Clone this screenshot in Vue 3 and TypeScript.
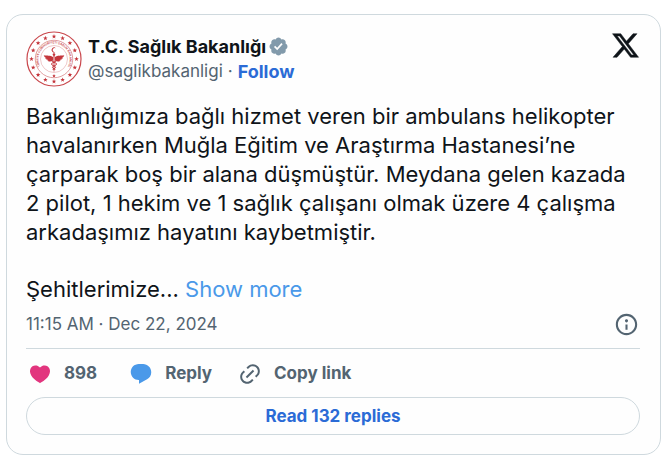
<script setup lang="ts">
interface Star {
  points: string
}

const handle = '@saglikbakanligi'
const replyCount = 132
const likeCount = 898

const paragraph =
  'Bakanlığımıza bağlı hizmet veren bir ambulans helikopter havalanırken Muğla Eğitim ve Araştırma Hastanesi’ne çarparak boş bir alana düşmüştür. Meydana gelen kazada 2 pilot, 1 hekim ve 1 sağlık çalışanı olmak üzere 4 çalışma arkadaşımız hayatını kaybetmiştir.'

// Ring of sixteen five-pointed stars around the ministry seal
function starPoints(cx: number, cy: number, outer: number): string {
  return Array.from({ length: 10 }, (_, i) => {
    const r = i % 2 === 0 ? outer : outer * 0.42
    const a = (Math.PI / 5) * i - Math.PI / 2
    return `${(cx + r * Math.cos(a)).toFixed(2)},${(cy + r * Math.sin(a)).toFixed(2)}`
  }).join(' ')
}

const stars: Star[] = Array.from({ length: 16 }, (_, i) => {
  const a = (Math.PI / 8) * i - Math.PI / 2
  return { points: starPoints(56 + 45 * Math.cos(a), 56 + 45 * Math.sin(a), 4.8) }
})
</script>

<template>
  <article class="card">
    <header class="head">
      <a class="avatar" href="#" aria-label="T.C. Sağlık Bakanlığı">
        <svg viewBox="0 0 112 112" aria-hidden="true">
          <defs>
            <path id="seal-ring" d="M37.6 81.3A31.2 31.2 0 1 1 74.4 81.3" />
          </defs>
          <circle cx="56" cy="56" r="54" fill="#fff" stroke="#c9474c" stroke-width="2.4" />
          <circle cx="56" cy="56" r="37.5" fill="none" stroke="#d4777a" stroke-width="1.4" />
          <circle cx="56" cy="56" r="27" fill="none" stroke="#dc9092" stroke-width="1" />
          <polygon v-for="(s, i) in stars" :key="i" :points="s.points" fill="#c4353b" />
          <text class="seal-text">
            <textPath href="#seal-ring" startOffset="50%" text-anchor="middle">TÜRKİYE CUMHURİYETİ SAĞLIK BAKANLIĞI</textPath>
          </text>
          <polygon points="56,86 57,88.400 59.500,88.600 57.600,90.200 58.200,92.600 56,91.300 53.800,92.600 54.400,90.200 52.500,88.600 55,88.400" fill="#c4353b" />
          <g fill="#c4353b">
            <path d="M59.500 34.300a5 5 0 1 0 0 7.400a4.200 4.200 0 1 1 0-7.400z" />
            <circle cx="56" cy="47" r="2.600" />
            <path d="M54.800 48h2.400l-.5 33h-1.400z" />
            <path d="M54 52c-5-4-12-2-18.500-3.500c1 4 4 5.500 7 5.700c-1.500.5-3 .3-4 0c1.500 3.300 4.500 4 7 3.800c-1 .6-2 .7-3 .6c2 3 7.500 3.300 11.500.4z" />
            <path d="M58 52c5-4 12-2 18.500-3.500c-1 4-4 5.500-7 5.700c1.500.5 3 .3 4 0c-1.500 3.300-4.500 4-7 3.800c1 .6 2 .7 3 .6c-2 3-7.500 3.300-11.500.4z" />
          </g>
          <path d="M51 58c0 5 10 4 10 8s-8 3-8 6.500s6 2.500 5 5.500M61 58c0 5-10 4-10 8s8 3 8 6.500s-6 2.500-5 5.500" fill="none" stroke="#c4353b" stroke-width="2" />
        </svg>
      </a>
      <div class="author">
        <a class="name" href="#">
          <span>T.C. Sağlık Bakanlığı</span>
          <svg class="verified" viewBox="0 0 24 24" role="img" aria-label="Verified account">
            <path d="M22.250 12c0-1.430-.88-2.670-2.190-3.340.46-1.390.2-2.900-.81-3.910s-2.520-1.270-3.910-.81c-.66-1.310-1.910-2.190-3.340-2.190s-2.670.88-3.330 2.190c-1.400-.46-2.910-.2-3.920.81s-1.260 2.520-.8 3.910c-1.310.67-2.200 1.910-2.200 3.340s.89 2.670 2.200 3.340c-.46 1.390-.21 2.900.8 3.910s2.520 1.260 3.910.81c.67 1.310 1.910 2.190 3.340 2.190s2.680-.88 3.340-2.190c1.390.45 2.900.2 3.910-.81s1.270-2.520.81-3.910c1.310-.67 2.190-1.910 2.190-3.340zm-11.710 4.200L6.800 12.460l1.410-1.420 2.260 2.260 4.800-5.230 1.470 1.360-6.200 6.770z" />
          </svg>
        </a>
        <div class="meta">
          <a class="handle" href="#">{{ handle }}</a>
          <span>·</span>
          <a class="follow" href="#">Follow</a>
        </div>
      </div>
      <a class="brand" href="#" aria-label="View on X">
        <svg viewBox="0 0 24 24" aria-hidden="true">
          <path d="M18.244 2.250h3.308l-7.227 8.260 8.502 11.240H16.170l-5.214-6.817L4.990 21.750H1.680l7.730-8.835L1.254 2.250H8.080l4.713 6.231zm-1.161 17.520h1.833L7.084 4.126H5.117z" />
        </svg>
      </a>
    </header>

    <div class="body">
      <p>{{ paragraph }}</p>
      <p>Şehitlerimize... <a class="more" href="#">Show more</a></p>
    </div>

    <div class="stamp">
      <a class="time" href="#"><time datetime="2024-12-22T11:15">11:15 AM · Dec 22, 2024</time></a>
      <a class="info" href="#" aria-label="Ads info and privacy">
        <svg viewBox="0 0 24 24" aria-hidden="true">
          <path d="M13.500 8.500c0 .83-.67 1.500-1.500 1.500s-1.500-.67-1.500-1.500S11.170 7 12 7s1.500.67 1.500 1.500zM13 17v-5h-2v5h2zm-1 5.250c5.660 0 10.250-4.590 10.250-10.250S17.660 1.750 12 1.750 1.750 6.340 1.750 12 6.340 22.250 12 22.250zM20.250 12c0 4.560-3.690 8.250-8.250 8.250S3.750 16.560 3.750 12 7.440 3.750 12 3.750s8.250 3.690 8.250 8.250z" />
        </svg>
      </a>
    </div>

    <div class="actions">
      <button type="button" class="action like">
        <svg viewBox="0 0 24 24" aria-hidden="true">
          <path d="M20.884 13.190c-1.351 2.480-4.001 5.120-8.379 7.670l-.503.3-.504-.3c-4.379-2.550-7.029-5.190-8.382-7.670-1.360-2.500-1.410-4.860-.514-6.670.887-1.790 2.647-2.910 4.601-3.010 1.651-.09 3.368.56 4.798 2.010 1.429-1.450 3.146-2.100 4.796-2.010 1.954.1 3.714 1.220 4.601 3.010.896 1.810.846 4.170-.514 6.670z" />
        </svg>
        <span>{{ likeCount }}</span>
      </button>
      <button type="button" class="action reply">
        <svg viewBox="0 0 24 24" aria-hidden="true">
          <path d="M1.751 10c0-4.420 3.584-8 8.005-8h4.366c4.490 0 8.129 3.640 8.129 8.130 0 2.960-1.607 5.680-4.196 7.110l-8.054 4.460v-3.690h-.067c-4.490.1-8.183-3.510-8.183-8.010z" />
        </svg>
        <span>Reply</span>
      </button>
      <button type="button" class="action">
        <svg viewBox="0 0 24 24" aria-hidden="true">
          <path d="M18.360 5.640c-1.950-1.960-5.110-1.960-7.070 0L9.880 7.050 8.460 5.640l1.420-1.420c2.730-2.730 7.160-2.730 9.900 0 2.730 2.740 2.730 7.170 0 9.900l-1.420 1.420-1.410-1.420 1.410-1.410c1.960-1.960 1.960-5.120 0-7.070zm-2.120 3.530l-7.070 7.070-1.410-1.410 7.070-7.070 1.410 1.410zm-12.020.71l1.420-1.420 1.410 1.420-1.410 1.410c-1.960 1.960-1.960 5.120 0 7.070 1.950 1.960 5.110 1.960 7.070 0l1.410-1.410 1.420 1.410-1.420 1.420c-2.730 2.730-7.160 2.730-9.900 0-2.730-2.740-2.730-7.170 0-9.900z" />
        </svg>
        <span>Copy link</span>
      </button>
    </div>

    <a class="replies" href="#">Read {{ replyCount }} replies</a>
  </article>
</template>

<style>
body {
  background: #fff;
}
</style>

<style scoped>
.card {
  margin: 14px 9px 14px 6px;
  padding: 16px 20px 19px 19px;
  border: 1px solid #cfd9de;
  border-radius: 17px;
  background: #fefefe;
  color: #0f1419;
  font-family: Inter, "Liberation Sans", sans-serif;
}

a {
  color: inherit;
  text-decoration: none;
}

svg {
  display: block;
  fill: currentColor;
}

.head {
  display: flex;
  align-items: flex-start;
  gap: 6px;
}

.avatar svg {
  width: 56px;
  height: 56px;
}

.seal-text {
  font-size: 6px;
  font-weight: 700;
  fill: #cb5054;
}

.author {
  flex: 1;
  min-width: 0;
  padding-top: 3px;
}

.name {
  display: flex;
  align-items: center;
  gap: 2px;
  font-size: 18px;
  line-height: 25px;
  font-weight: 700;
}

.verified {
  width: 21px;
  height: 21px;
  color: #829aab;
}

.meta {
  display: flex;
  gap: 5px;
  font-size: 17px;
  line-height: 25px;
  color: #536471;
}

.follow {
  font-size: 18px;
  font-weight: 700;
  color: #2b6bd6;
}

.brand svg {
  width: 29px;
  height: 29px;
  stroke: currentColor;
  stroke-width: 0.4;
}

.body {
  display: grid;
  gap: 28px;
  margin-top: 15px;
  font-size: 22px;
  line-height: 29px;
}

.body p {
  margin: 0;
}

.more {
  color: #4a99e9;
}

.stamp {
  display: flex;
  align-items: center;
  justify-content: space-between;
  padding: 8px 1px 11px 0;
  border-bottom: 1px solid #cfd9de;
  font-size: 17px;
  line-height: 25px;
  color: #536471;
}

.info svg {
  width: 25px;
  height: 25px;
}

.actions {
  display: flex;
  gap: 26px;
  padding: 12px 0 11px 2px;
}

.action {
  display: flex;
  align-items: center;
  gap: 12px;
  padding: 0;
  border: 0;
  background: none;
  color: #536471;
  font: inherit;
  font-size: 17px;
  line-height: 25px;
  font-weight: 700;
  cursor: pointer;
}

.action svg {
  width: 24px;
  height: 24px;
}

.like {
  padding-right: 6px;
}

.like svg {
  color: #e2357e;
}

.reply svg {
  color: #4a99e9;
}

.replies {
  display: block;
  border: 1px solid #cfd9de;
  border-radius: 19px;
  font-size: 17px;
  line-height: 36px;
  font-weight: 700;
  text-align: center;
  color: #2b6bd6;
}
</style>
